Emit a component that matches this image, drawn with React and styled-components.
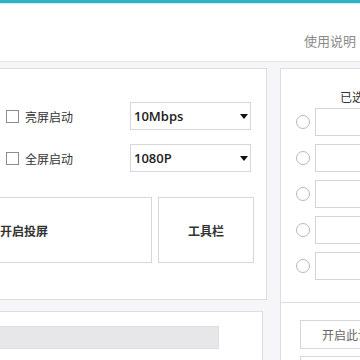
import React from 'react';
import styled, { createGlobalStyle } from 'styled-components';

const GlobalStyle = createGlobalStyle`
  html, body {
    margin: 0;
    padding: 0;
    width: 360px;
    height: 360px;
    overflow: hidden;
    background: #f6f6f8;
    font-family: 'Noto Sans CJK SC', 'Noto Sans', sans-serif;
  }
`;

const Page = styled.div`
  width: 360px;
  height: 360px;
  overflow: hidden;
`;

const Header = styled.header`
  height: 62px;
  background: #fff;
  border-top: 3px solid #2fb3c4;
  box-shadow: inset 0 1px 0 #c6f0f5;
  border-bottom: 1px solid #e2e3e8;
  display: flex;
  align-items: flex-end;
  justify-content: flex-end;
  padding: 0 4px 11px 0;
  box-sizing: border-box;
`;

const HelpLink = styled.a`
  color: #8a8a8a;
  font-size: 13px;
  cursor: pointer;
`;

const Body = styled.main`
  display: flex;
  align-items: flex-start;
  gap: 13px;
  padding-top: 6px;
  margin-left: -110px;
`;

const LeftColumn = styled.div`
  width: 377px;
  flex-shrink: 0;
  display: flex;
  flex-direction: column;
  gap: 11px;
`;

const Panel = styled.section`
  background: #fff;
  border: 1px solid #dcdde4;
  box-sizing: border-box;
  margin-right: ${(p) => p.$inset || 0}px;
`;

const SettingsPanel = styled(Panel)`
  height: 232px;
  padding: 33px 0 0 5px;
`;

const OptionGrid = styled.div`
  margin-left: 110px;
  display: grid;
  grid-template-columns: 124px 121px;
  row-gap: 14px;
  align-items: center;
`;

const CheckLabel = styled.label`
  display: flex;
  align-items: center;
  gap: 6px;
  font-size: 12px;
  color: #333;
`;

const Box = styled.span`
  width: 11px;
  height: 11px;
  border: 1px solid #8d8d8d;
  background: #fff;
`;

const Select = styled.div`
  height: 28px;
  border: 1px solid #d6d7de;
  box-sizing: border-box;
  display: flex;
  align-items: center;
  justify-content: space-between;
  padding: 0 2px 0 3px;
  font-family: 'Open Sans', 'Liberation Sans', sans-serif;
  font-size: 13px;
  font-weight: 600;
  color: #222;
  background: #fff;
`;

const Caret = styled.span`
  width: 0;
  height: 0;
  border-left: 4px solid transparent;
  border-right: 4px solid transparent;
  border-top: 5px solid #111;
`;

const ButtonRow = styled.div`
  display: flex;
  gap: 6px;
  margin-top: 25px;
`;

const BigButton = styled.button`
  width: ${(p) => p.$w}px;
  height: 66px;
  background: #fff;
  border: 1px solid #d6d7de;
  font-family: inherit;
  font-size: 12px;
  font-weight: 600;
  color: #333;
  padding: 0;
`;

const StatusPanel = styled(Panel)`
  height: 60px;
  padding: 14px 0 0 5px;
`;

const Bar = styled.div`
  width: 323px;
  height: 23px;
  background: #e7e7e9;
  border: 1px solid #dddde2;
  box-sizing: border-box;
`;

const RightPanel = styled(Panel)`
  width: 190px;
  flex-shrink: 0;
  height: 330px;
  display: flex;
  flex-direction: column;
`;

const DeviceSection = styled.div`
  flex-shrink: 0;
  border-bottom: 1px solid #dcdde4;
  height: 234px;
  padding: 20px 0 0 15px;
  box-sizing: border-box;
`;

const DeviceTitle = styled.div`
  font-size: 12px;
  color: #333;
  padding-left: 44px;
  line-height: 16px;
  margin-bottom: 3px;
`;

const DeviceList = styled.div`
  display: flex;
  flex-direction: column;
  gap: 8px;
`;

const DeviceRow = styled.div`
  display: flex;
  align-items: center;
  gap: 5px;
`;

const Radio = styled.span`
  width: 12px;
  height: 12px;
  border-radius: 50%;
  border: 1px solid #b8b8be;
  background: #fff;
`;

const DeviceInput = styled.div`
  width: 140px;
  height: 28px;
  border: 1px solid #d3d4dc;
  box-sizing: border-box;
  background: #fff;
`;

const ActionArea = styled.div`
  flex-shrink: 0;
  padding: 17px 0 0 19px;
  display: flex;
  flex-direction: column;
  gap: 7px;
`;

const ActionButton = styled.button`
  width: 150px;
  height: 29px;
  background: #fff;
  border: 1px solid #d6d7de;
  font-family: inherit;
  font-size: 12px;
  color: #666;
  text-align: left;
  padding: 0 0 0 21px;
`;

const devices = [1, 2, 3, 4, 5];

const App = () => (
  <Page>
    <GlobalStyle />
    <Header>
      <HelpLink>使用说明</HelpLink>
    </Header>
    <Body>
      <LeftColumn>
        <SettingsPanel>
          <OptionGrid>
            <CheckLabel>
              <Box />
              亮屏启动
            </CheckLabel>
            <Select>
              10Mbps
              <Caret />
            </Select>
            <CheckLabel>
              <Box />
              全屏启动
            </CheckLabel>
            <Select>
              1080P
              <Caret />
            </Select>
          </OptionGrid>
          <ButtonRow>
            <BigButton $w={256}>开启投屏</BigButton>
            <BigButton $w={96}>工具栏</BigButton>
          </ButtonRow>
        </SettingsPanel>
        <StatusPanel $inset={4}>
          <Bar />
        </StatusPanel>
      </LeftColumn>
      <RightPanel>
        <DeviceSection>
          <DeviceTitle>已选择设备</DeviceTitle>
          <DeviceList>
            {devices.map((d) => (
              <DeviceRow key={d}>
                <Radio />
                <DeviceInput />
              </DeviceRow>
            ))}
          </DeviceList>
        </DeviceSection>
        <ActionArea>
          <ActionButton>开启此设备</ActionButton>
          <ActionButton>关闭此设备</ActionButton>
        </ActionArea>
      </RightPanel>
    </Body>
  </Page>
);

export default App;
